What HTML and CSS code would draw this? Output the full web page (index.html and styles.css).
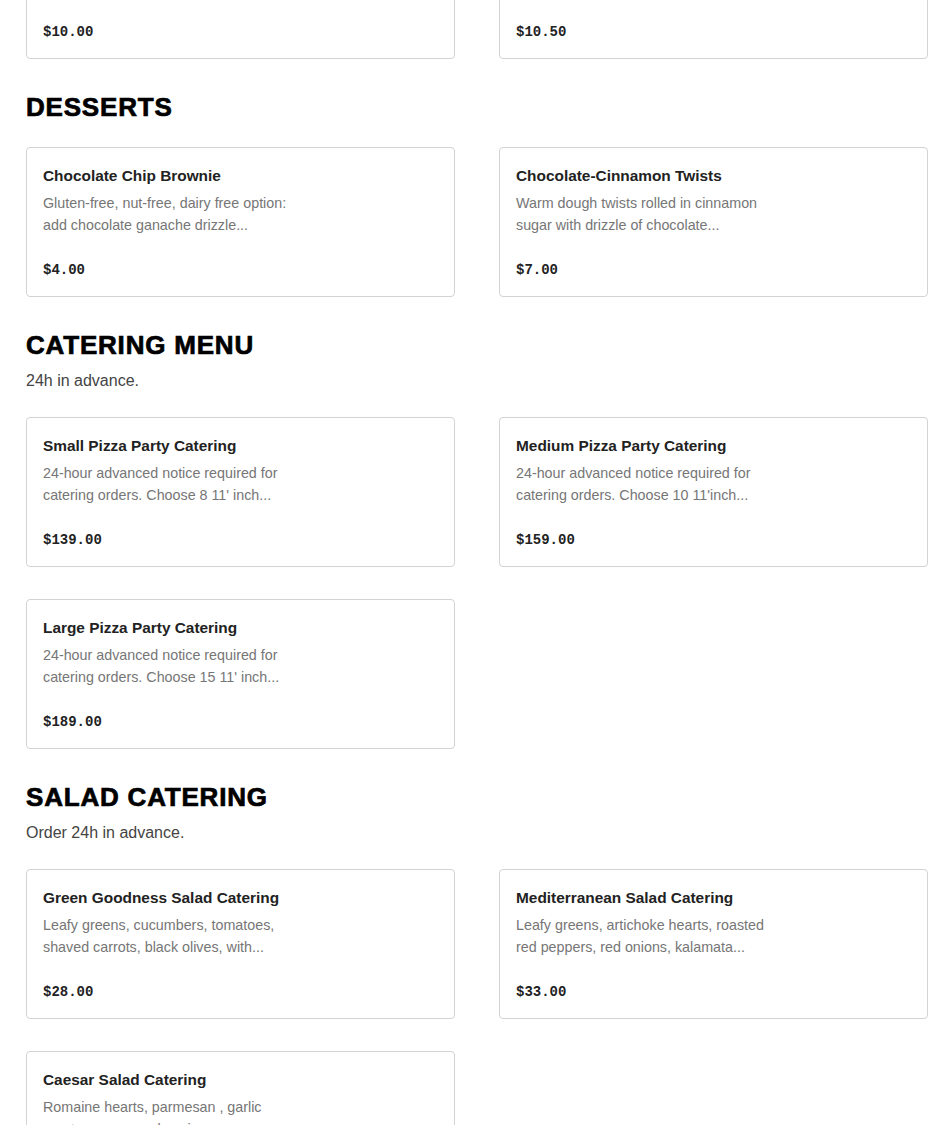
FILE: index.html
```html
<!DOCTYPE html>
<html lang="en">
<head>
    <meta charset="UTF-8">
    <meta name="viewport" content="width=device-width, initial-scale=1.0">
    <title>Menu</title>
    <link rel="stylesheet" href="styles.css">
</head>
<body>
    <main class="menu">

        <!-- Sides (scrolled past) -->
        <section class="menu-section">
            <div class="section-header">
                <h2>SIDES</h2>
            </div>
            <div class="item-grid">
                <div class="item-card">
                    <h3>Garlic Knots</h3>
                    <p class="item-desc">Hand-tied dough knots brushed with garlic butter, parmesan...</p>
                    <div class="item-price">$10.00</div>
                </div>
                <div class="item-card">
                    <h3>Cheesy Bread</h3>
                    <p class="item-desc">Mozzarella and parmesan baked on our house dough, served...</p>
                    <div class="item-price">$10.50</div>
                </div>
            </div>
        </section>

        <!-- Desserts -->
        <section class="menu-section">
            <div class="section-header">
                <h2>DESSERTS</h2>
            </div>
            <div class="item-grid">
                <div class="item-card">
                    <h3>Chocolate Chip Brownie</h3>
                    <p class="item-desc">Gluten-free, nut-free, dairy free option: add chocolate ganache drizzle...</p>
                    <div class="item-price">$4.00</div>
                </div>
                <div class="item-card">
                    <h3>Chocolate-Cinnamon Twists</h3>
                    <p class="item-desc">Warm dough twists rolled in cinnamon sugar with drizzle of chocolate...</p>
                    <div class="item-price">$7.00</div>
                </div>
            </div>
        </section>

        <!-- Catering Menu -->
        <section class="menu-section">
            <div class="section-header">
                <h2>CATERING MENU</h2>
                <p class="section-note">24h in advance.</p>
            </div>
            <div class="item-grid">
                <div class="item-card">
                    <h3>Small Pizza Party Catering</h3>
                    <p class="item-desc">24-hour advanced notice required for catering orders. Choose 8 11' inch...</p>
                    <div class="item-price">$139.00</div>
                </div>
                <div class="item-card">
                    <h3>Medium Pizza Party Catering</h3>
                    <p class="item-desc">24-hour advanced notice required for catering orders. Choose 10 11'inch...</p>
                    <div class="item-price">$159.00</div>
                </div>
                <div class="item-card">
                    <h3>Large Pizza Party Catering</h3>
                    <p class="item-desc">24-hour advanced notice required for catering orders. Choose 15 11' inch...</p>
                    <div class="item-price">$189.00</div>
                </div>
            </div>
        </section>

        <!-- Salad Catering -->
        <section class="menu-section">
            <div class="section-header">
                <h2>SALAD CATERING</h2>
                <p class="section-note">Order 24h in advance.</p>
            </div>
            <div class="item-grid">
                <div class="item-card">
                    <h3>Green Goodness Salad Catering</h3>
                    <p class="item-desc">Leafy greens, cucumbers, tomatoes, shaved carrots, black olives, with...</p>
                    <div class="item-price">$28.00</div>
                </div>
                <div class="item-card">
                    <h3>Mediterranean Salad Catering</h3>
                    <p class="item-desc">Leafy greens, artichoke hearts, roasted red peppers, red onions, kalamata...</p>
                    <div class="item-price">$33.00</div>
                </div>
                <div class="item-card">
                    <h3>Caesar Salad Catering</h3>
                    <p class="item-desc">Romaine hearts, parmesan , garlic croutons, caesar dressing...</p>
                    <div class="item-price">$30.00</div>
                </div>
            </div>
        </section>

    </main>
</body>
</html>
```

FILE: styles.css
```css
body {
    margin: 0;
    background: #fff;
    font-family: 'Liberation Sans', Arial, sans-serif;
    color: #222;
}

.menu {
    width: 902px;
    padding: 0 22px 40px 26px;
    margin-top: -147px;
}

.menu-section {
    margin-bottom: 32px;
}

.section-header {
    display: flex;
    flex-direction: column;
    gap: 8px;
    margin-bottom: 24px;
}

.section-header h2 {
    margin: 0;
    font-size: 26px;
    line-height: 32px;
    font-weight: bold;
    color: #000;
    letter-spacing: 0.8px;
    -webkit-text-stroke: 0.7px #000;
}

.section-note {
    margin: 0;
    font-size: 16px;
    line-height: 24px;
    color: #444;
}

.item-grid {
    display: grid;
    grid-template-columns: 1fr 1fr;
    column-gap: 44px;
    row-gap: 32px;
}

.item-card {
    height: 150px;
    box-sizing: border-box;
    padding: 18px 16px 16px 16px;
    border: 1px solid #d3d3d3;
    border-radius: 4px;
    display: flex;
    flex-direction: column;
}

.item-card h3 {
    margin: 0;
    font-size: 15.4px;
    line-height: 20px;
    font-weight: bold;
    color: #222;
}

.item-desc {
    margin: 6px 0 0 0;
    max-width: 266px;
    font-size: 14.3px;
    line-height: 22px;
    color: #767676;
    display: -webkit-box;
    -webkit-line-clamp: 2;
    -webkit-box-orient: vertical;
    overflow: hidden;
}

.item-price {
    margin-top: auto;
    font-family: 'Liberation Mono', 'Courier New', monospace;
    font-size: 14px;
    line-height: 20px;
    font-weight: bold;
    color: #222;
}
```
